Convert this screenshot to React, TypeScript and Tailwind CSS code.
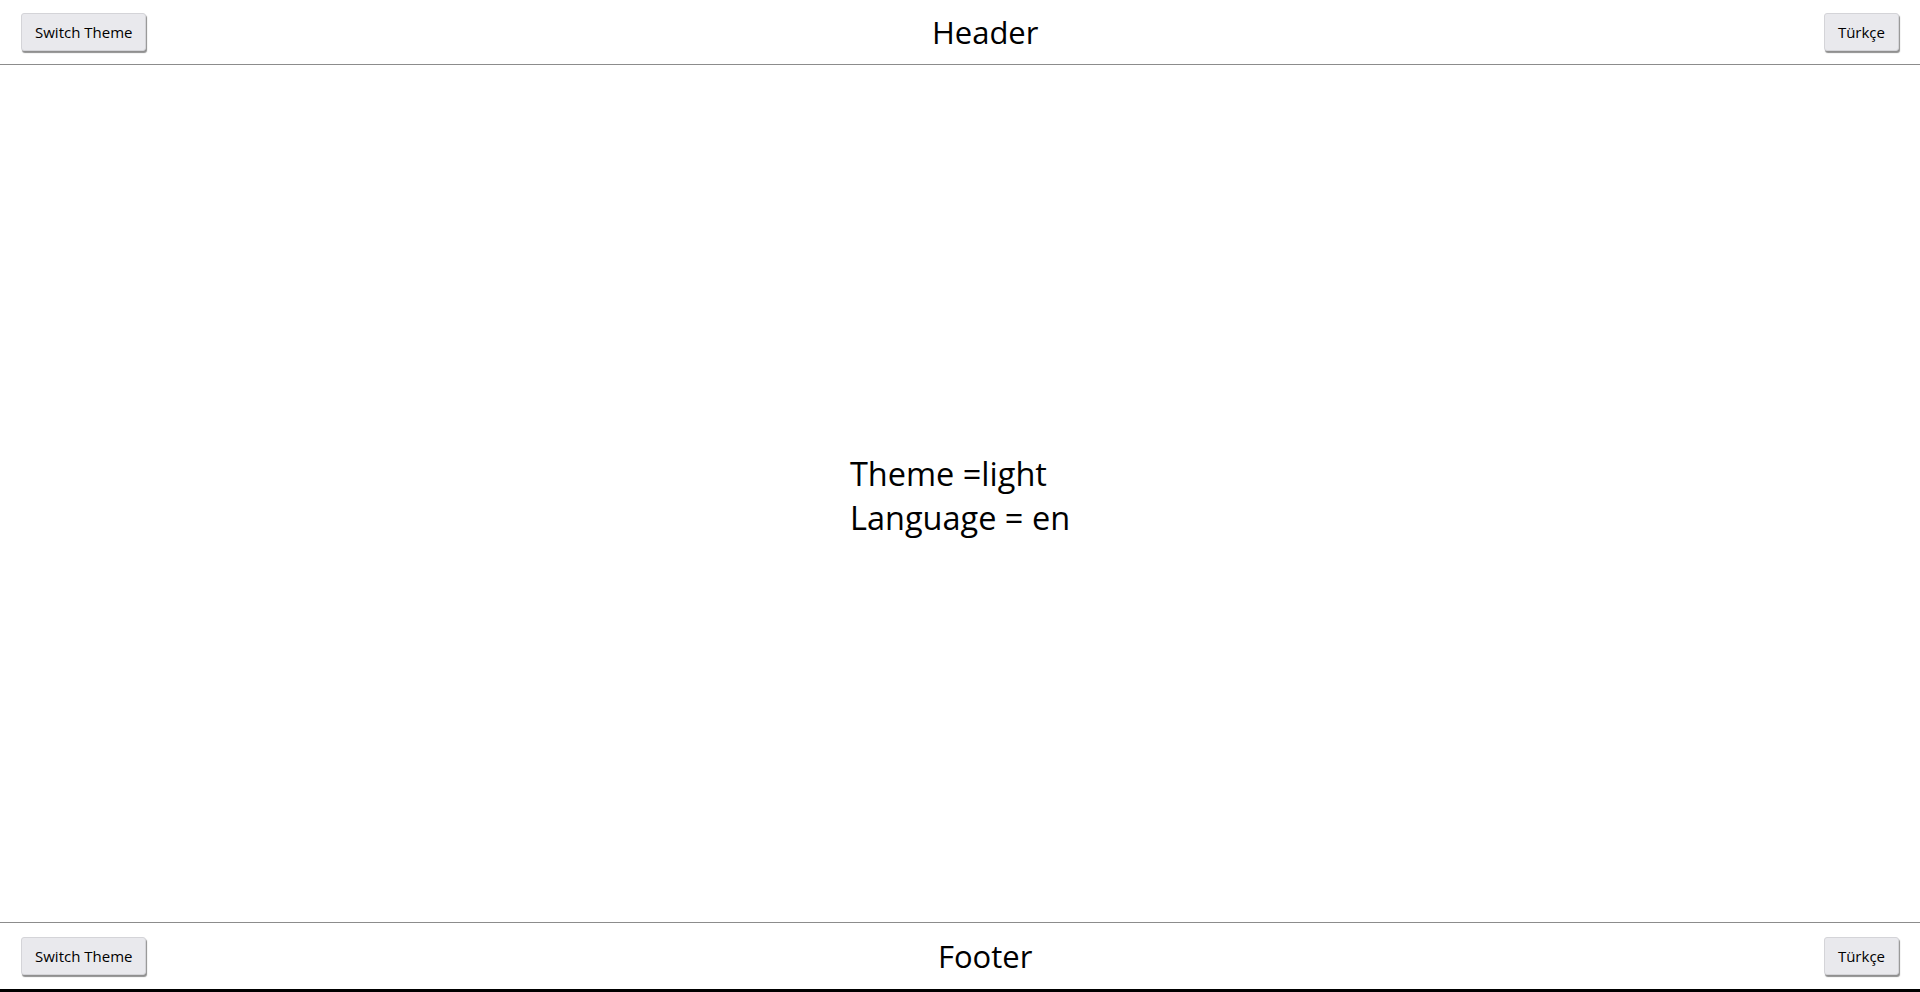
import React from 'react';

const font = { fontFamily: '"Open Sans", "Noto Sans", sans-serif' };

function ThemeButton({ label }: { label: string }) {
  return (
    <button className="h-[38px] px-[13px] bg-[#e9e9ed] text-[15px] text-black rounded-[3px] border border-[#d4d4d8] shadow-[1px_2px_1px_#8f8f8f]">
      {label}
    </button>
  );
}

function Bar({ title, className }: { title: string; className: string }) {
  return (
    <div className={`flex items-center justify-between px-[21px] ${className}`}>
      <ThemeButton label="Switch Theme" />
      <span className="text-[31px] text-black">{title}</span>
      <ThemeButton label="Türkçe" />
    </div>
  );
}

export default function App() {
  return (
    <div className="h-screen flex flex-col bg-white" style={font}>
      <Bar title="Header" className="h-[65px] border-b border-[#8c8c8c]" />
      <main className="flex-1 flex items-center justify-center pt-[5px]">
        <div className="text-[32.5px] leading-[44px] text-black">
          <div>Theme =light</div>
          <div>Language = en</div>
        </div>
      </main>
      <Bar title="Footer" className="h-[70px] border-t border-t-[#8c8c8c] border-b-[3px] border-b-black" />
    </div>
  );
}
